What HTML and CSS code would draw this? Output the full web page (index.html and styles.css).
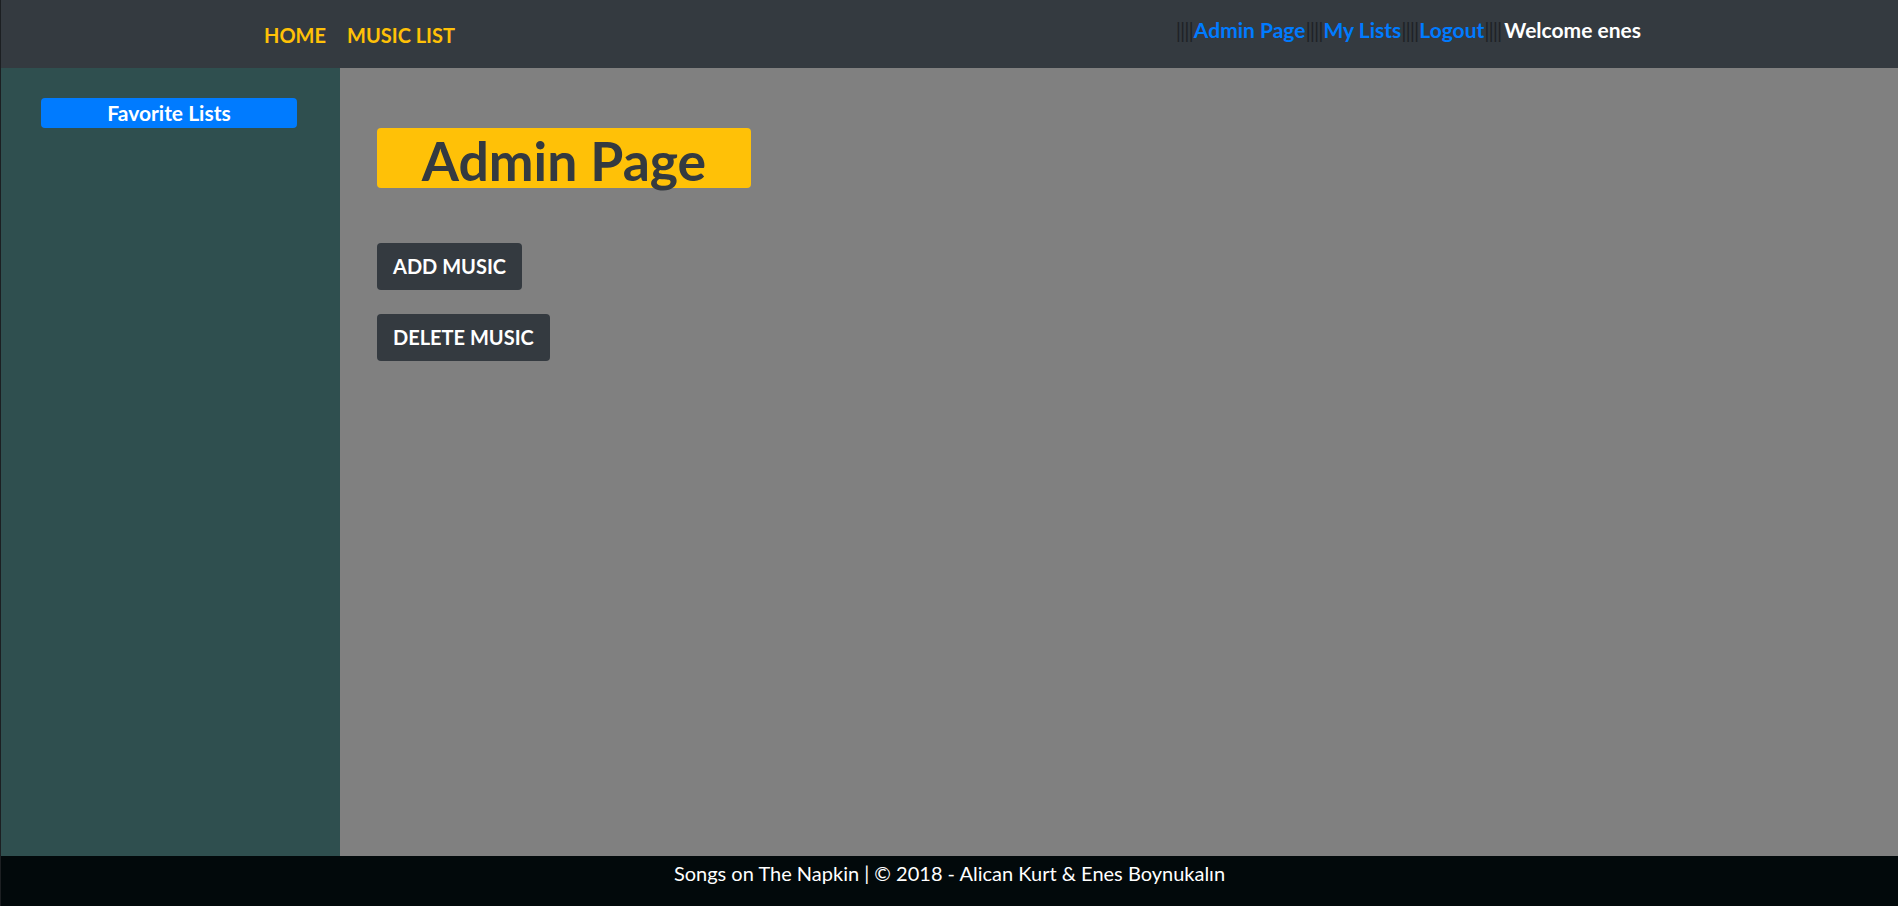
FILE: index.html
```html
<!DOCTYPE html>
<html>
<head>
<meta charset="utf-8">
<title>Admin Page</title>
<link rel="stylesheet" href="styles.css">
</head>
<body>
<div class="page">
  <header class="topbar">
    <nav class="main-nav">
      <a class="nav-link" href="#">HOME</a>
      <a class="nav-link" href="#">MUSIC LIST</a>
    </nav>
    <nav class="user-nav">
      <span class="sep">||||</span><a class="user-link" href="#">Admin Page</a><span class="sep">||||</span><a class="user-link" href="#">My Lists</a><span class="sep">||||</span><a class="user-link" href="#">Logout</a><span class="sep">||||</span><span class="welcome">Welcome enes</span>
    </nav>
  </header>
  <div class="body-row">
    <aside class="sidebar">
      <a class="fav-btn" href="#">Favorite Lists</a>
    </aside>
    <main class="content">
      <div class="title-box"><h1 class="title">Admin Page</h1></div>
      <div class="actions">
        <a class="action-btn" href="#">ADD MUSIC</a>
        <a class="action-btn" href="#">DELETE MUSIC</a>
      </div>
    </main>
  </div>
  <footer class="footer">
    <span class="footer-text">Songs on The Napkin | © 2018 - Alican Kurt &amp; Enes Boynukalın</span>
  </footer>
</div>
</body>
</html>
```
FILE: styles.css
```css
* { box-sizing: border-box; }
html, body { margin: 0; padding: 0; }
body {
  font-family: Lato, "Noto Sans", sans-serif;
  width: 1898px;
  height: 906px;
  overflow: hidden;
}
a { text-decoration: none; }
.page {
  display: flex;
  flex-direction: column;
  height: 906px;
  border-left: 1px solid #1c1f22;
}
.topbar {
  height: 68px;
  background: #343a40;
  display: flex;
  align-items: flex-start;
  flex-shrink: 0;
}
.main-nav {
  display: flex;
  gap: 21px;
  padding-left: 263px;
  padding-top: 22px;
}
.nav-link {
  color: #ffc107;
  font-weight: 700;
  font-size: 20px;
  line-height: 26px;
}
.user-nav {
  display: flex;
  align-items: baseline;
  margin-left: auto;
  margin-right: 257px;
  padding-top: 16px;
  font-size: 21px;
  font-weight: 700;
  line-height: 27px;
}
.sep { color: #1e2226; font-weight: 400; letter-spacing: -1px; padding-right: 1px; }
.user-link { color: #007bff; }
.welcome { color: #ffffff; margin-left: 2px; }
.body-row {
  flex: 1;
  display: flex;
}
.sidebar {
  width: 339px;
  background: #2f4f4f;
  padding: 30px 0 0 40px;
}
.fav-btn {
  display: block;
  width: 256px;
  height: 30px;
  background: #007bff;
  border-radius: 4px;
  color: #fff;
  font-weight: 700;
  font-size: 21px;
  line-height: 30px;
  text-align: center;
}
.content {
  flex: 1;
  background: #808080;
  padding: 60px 0 0 37px;
}
.title-box {
  width: 374px;
  height: 60px;
  background: #ffc107;
  border-radius: 4px;
}
.title {
  margin: 0;
  color: #343a40;
  font-size: 53.5px;
  font-weight: 700;
  line-height: 64px;
  text-align: center;
}
.actions {
  margin-top: 55px;
  display: flex;
  flex-direction: column;
  align-items: flex-start;
  gap: 24px;
}
.action-btn {
  display: block;
  height: 47px;
  padding: 0 16px;
  background: #343a40;
  border-radius: 4px;
  color: #fff;
  font-weight: 700;
  font-size: 20px;
  line-height: 47px;
}
.footer {
  height: 50px;
  background: #02090b;
  flex-shrink: 0;
  display: flex;
  justify-content: center;
}
.footer-text {
  color: #fff;
  font-size: 20px;
  line-height: 34px;
}
```
